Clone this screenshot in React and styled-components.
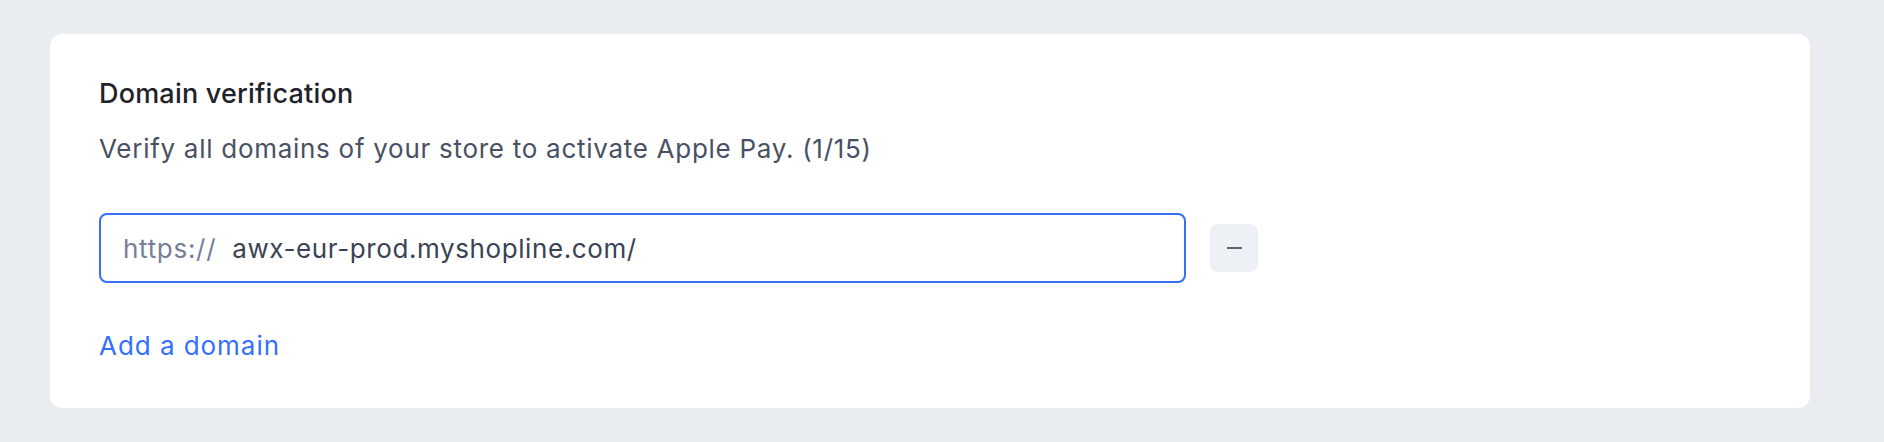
import React from 'react'
import styled, { createGlobalStyle } from 'styled-components'

const GlobalStyle = createGlobalStyle`
    html, body {
        margin: 0;
        padding: 0;
        background: #e9ecf1;
    }
    body {
        font-family: Inter, "Noto Sans", "Liberation Sans", sans-serif;
    }
`

class App extends React.Component {
    render() {
        return (
            <Page>
                <GlobalStyle />
                <Card>
                    <Title>Domain verification</Title>
                    <Description>Verify all domains of your store to activate Apple Pay. (1/15)</Description>
                    <Row>
                        <Field>
                            <Prefix>https://</Prefix>
                            <Input defaultValue="awx-eur-prod.myshopline.com/" />
                        </Field>
                        <Remove aria-label="Remove domain">
                            <Dash />
                        </Remove>
                    </Row>
                    <AddLink href="#">Add a domain</AddLink>
                </Card>
            </Page>
        )
    }
}

export default App

const Page = styled.div`
    padding: 34px 74px 34px 50px;
    min-height: 442px;
    box-sizing: border-box;
`
const Card = styled.div`
    background: #ffffff;
    border-radius: 12px;
    padding: 42px 48px 45px 49px;
    display: flex;
    flex-direction: column;
    align-items: flex-start;
`
const Title = styled.div`
    font-size: 27px;
    line-height: 36px;
    font-weight: 500;
    letter-spacing: 0.2px;
    color: #1f2329;
`
const Description = styled.div`
    margin-top: 20px;
    font-size: 26px;
    line-height: 34px;
    letter-spacing: 0.72px;
    color: #485163;
`
const Row = styled.div`
    margin-top: 47px;
    display: flex;
    align-items: center;
    gap: 24px;
`
const Field = styled.label`
    width: 1087px;
    height: 70px;
    box-sizing: border-box;
    border: 2px solid #3870f5;
    border-radius: 8px;
    display: flex;
    align-items: center;
    padding: 0 22px;
    gap: 16px;
`
const Prefix = styled.span`
    font-size: 26px;
    letter-spacing: 0.7px;
    color: #758096;
`
const Input = styled.input`
    flex: 1;
    border: none;
    outline: none;
    padding: 0;
    background: transparent;
    font-family: inherit;
    font-size: 26px;
    letter-spacing: 0.6px;
    color: #3a4354;
`
const Remove = styled.button`
    width: 48px;
    height: 48px;
    border: none;
    border-radius: 8px;
    background: #edf0f4;
    display: flex;
    align-items: center;
    justify-content: center;
    padding: 0;
`
const Dash = styled.span`
    width: 15px;
    height: 2px;
    background: #5c6373;
`
const AddLink = styled.a`
    margin-top: 46px;
    font-size: 26px;
    line-height: 34px;
    letter-spacing: 0.95px;
    color: #3370ff;
    text-decoration: none;
`
